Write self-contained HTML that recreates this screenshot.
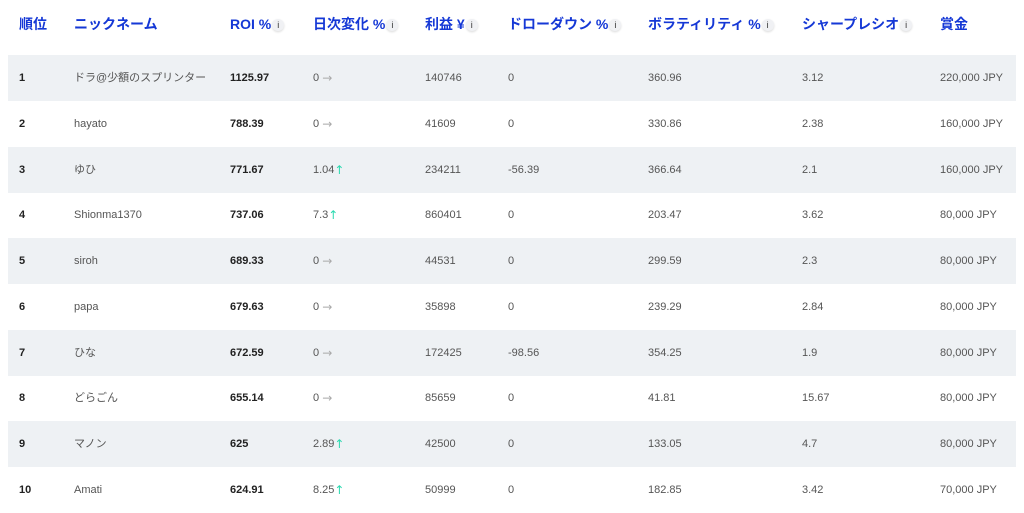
<!DOCTYPE html>
<html><head><meta charset="utf-8"><style>
body{margin:0;width:1024px;height:510px;background:#fff;overflow:hidden;font-family:"Liberation Sans","Noto Sans CJK JP",sans-serif;}
.h{position:absolute;top:14px;height:20px;line-height:20px;font-size:14px;font-weight:bold;color:#1538d6;white-space:nowrap}
.i{display:inline-block;width:12px;height:12px;border-radius:50%;background:#f0f1f4;box-shadow:0 1px 2px rgba(0,0,0,.15);color:#333;font-size:9px;font-weight:normal;text-align:center;line-height:12px;vertical-align:1px;margin-left:1px}
.r{position:absolute;left:8px;width:1008px;height:46px;font-size:11px;color:#555}
.r.s{background:#eef1f4}
.r span{position:absolute;top:0;height:46px;line-height:46px;white-space:nowrap}
.b{font-weight:bold;color:#222}
.g,.u{font-family:"DejaVu Sans",sans-serif;font-size:12px;font-weight:normal;display:inline-block;line-height:1;vertical-align:-1px}
.g{color:#aaa}.u{color:#2bd9b0}
</style></head><body>
<div class="h" style="left:19px">順位</div>
<div class="h" style="left:74px">ニックネーム</div>
<div class="h" style="left:230px">ROI %<span class="i">i</span></div>
<div class="h" style="left:313px">日次変化 %<span class="i">i</span></div>
<div class="h" style="left:425px">利益 ¥<span class="i">i</span></div>
<div class="h" style="left:508px">ドローダウン %<span class="i">i</span></div>
<div class="h" style="left:648px">ボラティリティ %<span class="i">i</span></div>
<div class="h" style="left:802px">シャープレシオ<span class="i">i</span></div>
<div class="h" style="left:940px">賞金</div>

<div class="r s" style="top:55px"><span class="b" style="left:11px">1</span><span style="left:66px">ドラ@少額のスプリンター</span><span class="b" style="left:222px">1125.97</span><span style="left:305px">0 <b class="g">→</b></span><span style="left:417px">140746</span><span style="left:500px">0</span><span style="left:640px">360.96</span><span style="left:794px">3.12</span><span style="left:932px">220,000 JPY</span></div>
<div class="r" style="top:101px"><span class="b" style="left:11px">2</span><span style="left:66px">hayato</span><span class="b" style="left:222px">788.39</span><span style="left:305px">0 <b class="g">→</b></span><span style="left:417px">41609</span><span style="left:500px">0</span><span style="left:640px">330.86</span><span style="left:794px">2.38</span><span style="left:932px">160,000 JPY</span></div>
<div class="r s" style="top:147px"><span class="b" style="left:11px">3</span><span style="left:66px">ゆひ</span><span class="b" style="left:222px">771.67</span><span style="left:305px">1.04<b class="u">↑</b></span><span style="left:417px">234211</span><span style="left:500px">-56.39</span><span style="left:640px">366.64</span><span style="left:794px">2.1</span><span style="left:932px">160,000 JPY</span></div>
<div class="r" style="top:192px"><span class="b" style="left:11px">4</span><span style="left:66px">Shionma1370</span><span class="b" style="left:222px">737.06</span><span style="left:305px">7.3<b class="u">↑</b></span><span style="left:417px">860401</span><span style="left:500px">0</span><span style="left:640px">203.47</span><span style="left:794px">3.62</span><span style="left:932px">80,000 JPY</span></div>
<div class="r s" style="top:238px"><span class="b" style="left:11px">5</span><span style="left:66px">siroh</span><span class="b" style="left:222px">689.33</span><span style="left:305px">0 <b class="g">→</b></span><span style="left:417px">44531</span><span style="left:500px">0</span><span style="left:640px">299.59</span><span style="left:794px">2.3</span><span style="left:932px">80,000 JPY</span></div>
<div class="r" style="top:284px"><span class="b" style="left:11px">6</span><span style="left:66px">papa</span><span class="b" style="left:222px">679.63</span><span style="left:305px">0 <b class="g">→</b></span><span style="left:417px">35898</span><span style="left:500px">0</span><span style="left:640px">239.29</span><span style="left:794px">2.84</span><span style="left:932px">80,000 JPY</span></div>
<div class="r s" style="top:330px"><span class="b" style="left:11px">7</span><span style="left:66px">ひな</span><span class="b" style="left:222px">672.59</span><span style="left:305px">0 <b class="g">→</b></span><span style="left:417px">172425</span><span style="left:500px">-98.56</span><span style="left:640px">354.25</span><span style="left:794px">1.9</span><span style="left:932px">80,000 JPY</span></div>
<div class="r" style="top:375px"><span class="b" style="left:11px">8</span><span style="left:66px">どらごん</span><span class="b" style="left:222px">655.14</span><span style="left:305px">0 <b class="g">→</b></span><span style="left:417px">85659</span><span style="left:500px">0</span><span style="left:640px">41.81</span><span style="left:794px">15.67</span><span style="left:932px">80,000 JPY</span></div>
<div class="r s" style="top:421px"><span class="b" style="left:11px">9</span><span style="left:66px">マノン</span><span class="b" style="left:222px">625</span><span style="left:305px">2.89<b class="u">↑</b></span><span style="left:417px">42500</span><span style="left:500px">0</span><span style="left:640px">133.05</span><span style="left:794px">4.7</span><span style="left:932px">80,000 JPY</span></div>
<div class="r" style="top:467px"><span class="b" style="left:11px">10</span><span style="left:66px">Amati</span><span class="b" style="left:222px">624.91</span><span style="left:305px">8.25<b class="u">↑</b></span><span style="left:417px">50999</span><span style="left:500px">0</span><span style="left:640px">182.85</span><span style="left:794px">3.42</span><span style="left:932px">70,000 JPY</span></div>
</body></html>
